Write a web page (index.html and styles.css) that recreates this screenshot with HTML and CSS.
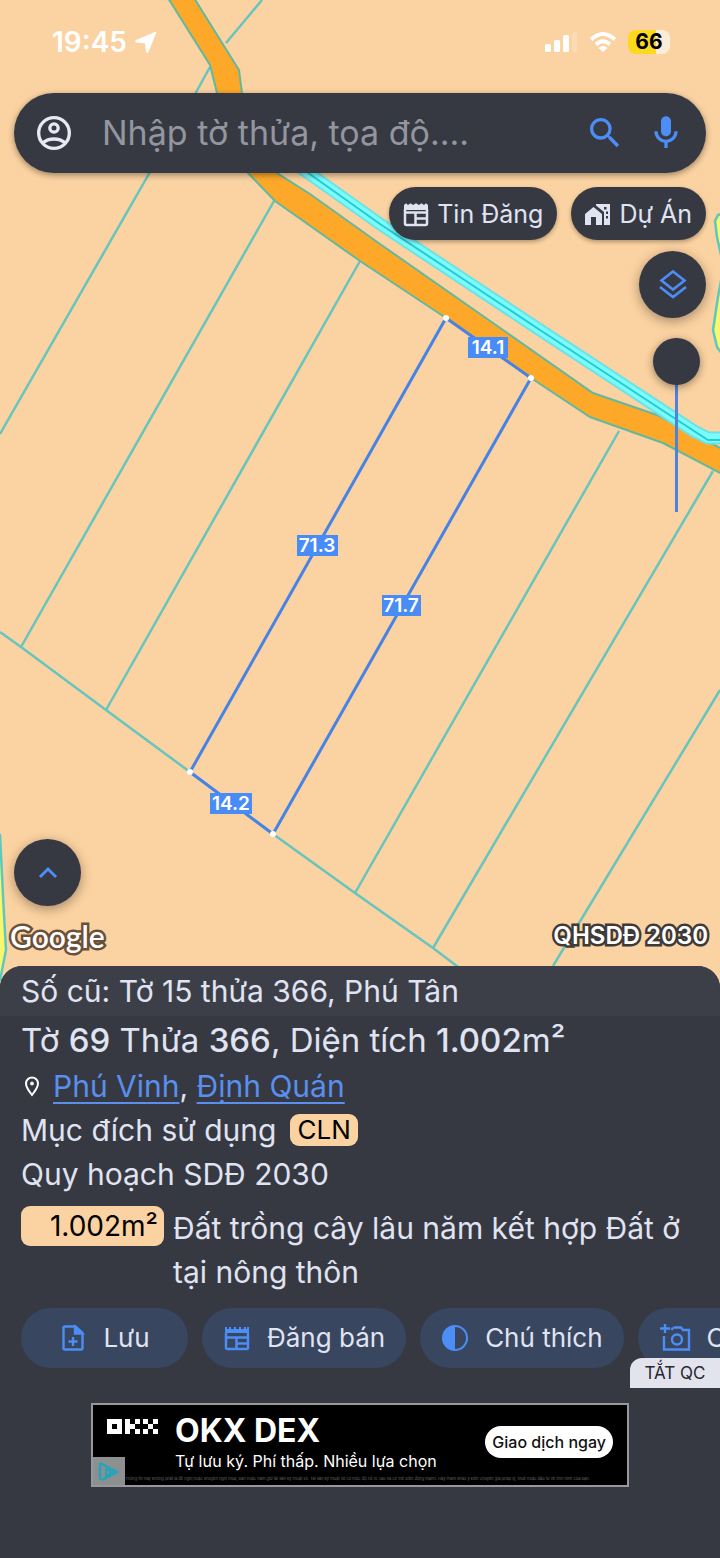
FILE: index.html
```html
<!DOCTYPE html>
<html lang="vi">
<head>
	<meta charset="UTF-8">
	<meta name="viewport" content="width=device-width, initial-scale=1.0">
	<title>Tờ 69 Thửa 366</title>
	<link rel="stylesheet" href="styles.css">
</head>
<body>
	<main class="map">
		<!-- parcels, road and canal -->
		<svg class="map-canvas" viewBox="0 0 720 990" preserveAspectRatio="xMidYMin slice">
			<g class="field">
				<path d="M-5 830L0 835L4 915L6 950L0 980L-5 980Z"/>
				<path d="M724 213L718 215L715 221L717 237L721 255"/>
				<path d="M722 275L718 297L713 330L717 347L722 354"/>
			</g>
			<g class="parcel">
				<path d="M262 0L226 43M210 67L194 96"/>
				<path d="M150 172L0 434"/>
				<path d="M274 201L21 647"/>
				<path d="M360 261L106 710"/>
				<path d="M619 431L355 893"/>
				<path d="M713 471L433 948"/>
				<path d="M720 690L553 966"/>
				<path d="M0 632L21 647L106 710L190 772L273 834L355 893L433 948L470 976"/>
			</g>
			<path class="road" d="M168 -2L210 65L217 93L225 140L248 173L275 201L360 261L446 318L531 378L590 417L663 443L722 474L722 449L673 423L657 415L593 393L503 330L380 244L310 194L277 173L245 120L242 93L239 70L194 -2Z"/>
			<path class="canal-edge" d="M290 160L380 224L540 330L694 431L708 438L726 438"/>
			<path class="canal" d="M290 160L380 224L540 330L694 431L708 438L726 438"/>
			<path class="canal-line" d="M290 160L380 224L540 330L694 431L708 440L726 440"/>
			<path class="selected" d="M446 318L531 378L273 834L190 772Z"/>
			<g class="corner">
				<circle cx="446" cy="318" r="3"/>
				<circle cx="531" cy="378" r="3"/>
				<circle cx="273" cy="834" r="3"/>
				<circle cx="190" cy="772" r="3"/>
			</g>
			<g class="measure">
				<rect x="468" y="337" width="40" height="21"/><text x="488" y="354">14.1</text>
				<rect x="297" y="535" width="41" height="21"/><text x="317" y="552">71.3</text>
				<rect x="382" y="595" width="39" height="21"/><text x="401" y="612">71.7</text>
				<rect x="210" y="793" width="42" height="21"/><text x="231" y="810">14.2</text>
			</g>
		</svg>

		<header class="status">
			<span class="time">19:45</span>
			<svg class="locate" width="24" height="24" viewBox="0 0 24 24"><path d="M22 2L14 22Q13 23 12.5 22L11.5 13L2 12Q.5 11.300 2 10.500Z" fill="#fff" stroke="#fff" stroke-linejoin="round"/></svg>
			<svg class="signal" width="32" height="20" viewBox="0 0 32 20" fill="#fff">
				<rect y="12" width="6" height="8" rx="1.5"/><rect x="9" y="8" width="6" height="12" rx="1.5"/><rect x="18" y="3" width="6" height="17" rx="1.5"/><rect x="27" width="5" height="20" rx="1.5" opacity=".2"/>
			</svg>
			<svg width="28" height="22" viewBox="0 0 28 22" fill="none" stroke="#fff" stroke-width="4">
				<path d="M2 8.500Q14-2.500 26 8.500M7 13.500Q14 7 21 13.500"/><path d="M14 21L9.500 17Q14 13 18.500 17Z" fill="#fff" stroke="none"/>
			</svg>
			<span class="battery">66</span>
		</header>

		<form class="search" role="search">
			<button class="icon-btn" type="button" aria-label="Tài khoản">
				<svg width="40" height="40" viewBox="0 0 24 24" fill="none" stroke="#e6e9f5" stroke-width="2"><circle cx="12" cy="12" r="9.2"/><circle cx="12" cy="9" r="2.5"/><path d="M5.300 17.900C9 14.800 15 14.800 18.700 17.900"/></svg>
			</button>
			<input class="search-input" type="text" placeholder="Nhập tờ thửa, tọa độ...." aria-label="Nhập tờ thửa, tọa độ">
			<button class="icon-btn" type="submit" aria-label="Tìm kiếm">
				<svg width="40" height="40" viewBox="0 0 24 24" fill="#4c8df6"><path d="M15.500 14h-.79l-.28-.27A6.471 6.471 0 0 0 16 9.500 6.500 6.500 0 1 0 9.500 16c1.610 0 3.090-.59 4.230-1.570l.27.28v.79l5 4.990L20.490 19l-4.990-5zm-6 0C7.010 14 5 11.990 5 9.500S7.010 5 9.500 5 14 7.010 14 9.500 11.990 14 9.500 14z"/></svg>
			</button>
			<button class="icon-btn" type="button" aria-label="Giọng nói">
				<svg width="40" height="40" viewBox="0 0 24 24" fill="#4c8df6"><path d="M12 14c1.660 0 3-1.340 3-3V5c0-1.660-1.340-3-3-3S9 3.340 9 5v6c0 1.660 1.340 3 3 3zm5-3c0 2.760-2.240 5-5 5s-5-2.240-5-5H5c0 3.530 2.610 6.430 6 6.920V21h2v-3.080c3.390-.49 6-3.390 6-6.920h-2z"/></svg>
			</button>
		</form>

		<nav class="chips">
			<button class="chip" type="button">
				<svg width="26" height="28" viewBox="1 0 26 28"><path d="M3 9V23.500Q3 25 4.500 25H23.500Q25 25 25 23.500V9M3 12.500H25M13.500 12.500V25M14 18.500H25" fill="none" stroke="#e0e3f2" stroke-width="2.500"/><path d="M2 5l2-1.800 2 1.800 2.500-1.800L11 5l3-1.800L17 5l2.500-1.800L22 5l2-1.800L26 5v5H2Z" fill="#e0e3f2"/></svg>
				Tin Đăng
			</button>
			<button class="chip" type="button">
				<svg width="26" height="28" viewBox="1 0 26 28" fill="#e0e3f2"><path d="M1 14L9.500 7L18 14V25H12V17H7V25H1Z"/><path fill-rule="evenodd" d="M12 4H26V25H20V12L12 5.500ZM20 7V9.500H22.500V7ZM22 11.500V14H24V11.500ZM22 16V18.500H24V16Z"/></svg>
				Dự Án
			</button>
		</nav>

		<div class="tools">
			<button class="round" type="button" aria-label="Lớp bản đồ">
				<svg width="32" height="32" viewBox="0 0 32 32" fill="none" stroke="#4c8df6" stroke-width="2.6"><path d="M16 2.500L27.500 11.500L16 20.500L4.500 11.500Z"/><path d="M3 18L16 28L29 18"/></svg>
			</button>
			<input class="opacity" type="range" min="0" max="100" value="100" aria-label="Độ mờ">
		</div>

		<div class="map-bottom">
			<button class="round" type="button" aria-label="Mở rộng">
				<svg width="24" height="24" viewBox="0 0 24 24" fill="none" stroke="#4c8df6" stroke-width="3"><path d="M4 16L12 8L20 16"/></svg>
			</button>
			<div class="credits">
				<span class="google">Google</span>
				<span class="plan">QHSDĐ 2030</span>
			</div>
		</div>
	</main>

	<section class="sheet">
		<p class="old-number">Số cũ: Tờ 15 thửa 366, Phú Tân</p>
		<div class="info">
			<h1 class="title">Tờ <b>69</b> Thửa <b>366</b>, Diện tích <b>1.002</b>m²</h1>
			<p class="place">
				<svg width="22" height="22" viewBox="0 0 22 22" fill="none" stroke="#fff" stroke-width="2"><path d="M11 20C7 15 5 12 5 8.500A6 6 0 0 1 17 8.500C17 12 15 15 11 20Z"/><circle cx="11" cy="8.5" r="1.5" fill="#fff" stroke-width="1"/></svg>
				<span><a href="#">Phú Vinh</a>, <a href="#">Định Quán</a></span>
			</p>
			<p class="purpose">Mục đích sử dụng <span class="code">CLN</span></p>
			<p>Quy hoạch SDĐ 2030</p>
			<div class="land">
				<span class="area">1.002m²</span>
				<p>Đất trồng cây lâu năm kết hợp Đất ở tại nông thôn</p>
			</div>
		</div>

		<div class="actions">
			<button class="action" type="button">
				<svg width="28" height="28" viewBox="0 0 28 28" fill="none" stroke="#4c8df6" stroke-width="2.4"><path d="M16.500 2.500H6Q4.500 2.500 4.500 4V24Q4.500 25.500 6 25.500H22Q23.500 25.500 23.500 24V9Z" stroke-linejoin="round"/><path d="M16 3V9.500H23Z" fill="#4c8df6"/><path d="M14 13V22M9.500 17.500H18.500"/></svg>
				Lưu
			</button>
			<button class="action" type="button">
				<svg width="28" height="28" viewBox="0 0 28 28"><path d="M3 9V23.500Q3 25 4.500 25H23.500Q25 25 25 23.500V9M3 13.500H25M13.500 13.500V25M14 19.500H25" fill="none" stroke="#4c8df6" stroke-width="2.500"/><path d="M2 3h2v2h2V3h2v2h3V3h2v2h3V3h2v2h3V3h2v2h1V3h2v6H2Z" fill="#4c8df6"/></svg>
				Đăng bán
			</button>
			<button class="action" type="button">
				<svg width="28" height="28" viewBox="0 0 28 28"><circle cx="14" cy="14" r="12" fill="none" stroke="#4c8df6" stroke-width="2"/><path d="M14 1.500A12.500 12.500 0 0 0 14 26.500Z" fill="#4c8df6"/></svg>
				Chú thích
			</button>
			<button class="action" type="button">
				<svg width="32" height="28" viewBox="0 0 32 28" fill="none" stroke="#4c8df6" stroke-width="2.4"><path d="M6 0V9M1 4.500H11M5 12V25.500H30V6H24L22 3.500H14.500M14 3.500L12.500 6"/><circle cx="18" cy="15.5" r="5"/></svg>
				Chụp ảnh
			</button>
		</div>

		<div class="ad-area">
			<button class="ad-off" type="button">TẮT QC</button>
			<aside class="ad">
				<svg class="okx" width="52" height="16" viewBox="0 0 52 16" fill="#fff"><path fill-rule="evenodd" d="M0 0H15V15H0ZM5 5V10H10V5Z"/><path d="M18 0h5v5h5v5h-5v5h-5ZM28 0h5v5h-5ZM28 10h5v5h-5ZM36 0h5v5h-5ZM46 0h5v5h-5ZM41 5h5v5h-5ZM36 10h5v5h-5ZM46 10h5v5h-5Z"/></svg>
				<div class="ad-copy">
					<strong>OKX DEX</strong>
					<span>Tự lưu ký. Phí thấp. Nhiều lựa chọn</span>
				</div>
				<a class="ad-cta" href="#">Giao dịch ngay</a>
				<small class="ad-note">Thông tin này không phải là đề nghị hoặc khuyến nghị mua, bán hoặc nắm giữ tài sản kỹ thuật số. Tài sản kỹ thuật số có mức độ rủi ro cao và có thể biến động mạnh. Hãy tham khảo ý kiến chuyên gia pháp lý, thuế hoặc đầu tư về tình hình của bạn.</small>
				<svg class="ad-choices" width="32" height="28" viewBox="0 0 32 28"><path d="M0 0H32V28H0Z" fill="#8d8f90"/><path d="M7 6V23M7 6L24 15L9 23" fill="none" stroke="#20a5bd" stroke-width="2.5"/><path d="M13 12V19L19 15Z" fill="none" stroke="#20a5bd" stroke-width="2"/></svg>
			</aside>
		</div>
	</section>
</body>
</html>
```
FILE: styles.css
```css
* {
	box-sizing: border-box;
	margin: 0;
	padding: 0;
}

body {
	display: flex;
	flex-direction: column;
	min-height: 100vh;
	background: #363941;
	color: #e0e3f2;
	font-family: Inter, "Noto Sans", sans-serif;
	font-size: 30px;
	line-height: 44px;
	overflow-x: hidden;
}

button, input {
	border: 0;
	background: none;
	color: inherit;
	font: inherit;
}

svg {
	flex: none;
	display: block;
}

/* map */
.map {
	position: relative;
	flex: 1;
	display: flex;
	flex-direction: column;
	padding: 0 14px 32px;
	background: #fbd2a1;
}

.map > * {
	position: relative;
}

.map > .map-canvas {
	position: absolute;
	top: 0;
	left: 0;
	width: 100%;
	height: 100%;
}

.parcel {
	fill: none;
	stroke: #66c5be;
	stroke-width: 2.5;
}

.field {
	fill: #f9f76e;
	stroke: #5cc9bd;
	stroke-width: 2.5;
}

.road {
	fill: #fda829;
	stroke: #62b9a0;
	stroke-width: 2;
}

.canal-edge, .canal, .canal-line {
	fill: none;
	stroke: #6be3e6;
	stroke-width: 13;
}

.canal {
	stroke: #7cfbfc;
	stroke-width: 9;
}

.canal-line {
	stroke: #25cbd3;
	stroke-width: 2;
}

.selected {
	fill: none;
	stroke: #4583e6;
	stroke-width: 3;
}

.corner {
	fill: #fff;
}

.measure rect {
	fill: #4a8cf5;
}

.measure text {
	fill: #fff;
	font-size: 19px;
	font-weight: 600;
	text-anchor: middle;
}

.status {
	display: flex;
	align-items: center;
	height: 93px;
	padding: 0 36px 10px 38px;
	color: #fff;
}

.time {
	font-size: 28px;
	font-weight: 600;
}

.locate {
	margin-left: 7px;
}

.signal {
	margin: 0 12px 0 auto;
}

.battery {
	width: 42px;
	height: 24px;
	margin-left: 11px;
	border-radius: 8px;
	background: linear-gradient(90deg, #fbd91c 66%, #fbecd9 66%);
	color: #000;
	font-size: 21px;
	font-weight: 700;
	line-height: 24px;
	text-align: center;
}

.search {
	display: flex;
	align-items: center;
	height: 80px;
	padding: 0 20px;
	border-radius: 40px;
	background: #363941;
	box-shadow: 0 2px 6px rgba(0, 0, 0, .4);
}

.icon-btn {
	cursor: pointer;
}

.icon-btn + .icon-btn {
	margin-left: 21px;
}

.search-input {
	flex: 1;
	min-width: 0;
	padding: 0 28px;
	font-size: 34px;
	outline: none;
}

.search-input::placeholder {
	color: #93959f;
}

.chips {
	display: flex;
	justify-content: flex-end;
	gap: 14px;
	margin-top: 14px;
}

.chip {
	display: flex;
	align-items: center;
	gap: 8px;
	height: 53px;
	padding: 0 14px;
	border-radius: 27px;
	background: #363941;
	box-shadow: 0 2px 4px rgba(0, 0, 0, .3);
	font-size: 25px;
	cursor: pointer;
}

.tools {
	display: flex;
	flex-direction: column;
	align-items: flex-end;
	gap: 20px;
	margin-top: 11px;
}

.round {
	display: flex;
	align-items: center;
	justify-content: center;
	width: 67px;
	height: 67px;
	border-radius: 50%;
	background: #363941;
	box-shadow: 0 3px 12px rgba(0, 0, 0, .35);
	cursor: pointer;
}

.opacity {
	appearance: none;
	writing-mode: vertical-lr;
	direction: rtl;
	width: 47px;
	height: 174px;
	margin-right: 6px;
	background: linear-gradient(#4f82dc, #4f82dc) center / 3px 100% no-repeat;
}

.opacity::-webkit-slider-thumb {
	appearance: none;
	width: 47px;
	height: 47px;
	border-radius: 50%;
	background: #363941;
	box-shadow: 0 2px 8px rgba(0, 0, 0, .4);
}

.map-bottom {
	margin-top: auto;
}

.credits {
	display: flex;
	align-items: center;
	justify-content: space-between;
	height: 36px;
	margin: 12px -2px 0 -4px;
	color: #fff;
	font-size: 24px;
	font-weight: 600;
	line-height: 36px;
	-webkit-text-stroke: 5px #3e3a38;
	paint-order: stroke fill;
}

.google {
	font-family: Lato, sans-serif;
	font-size: 30px;
	-webkit-text-stroke: 5px #695039;
}

/* bottom sheet */
.sheet {
	position: relative;
	margin-top: -20px;
	border-radius: 22px 22px 0 0;
	background: #363941;
	overflow: hidden;
}

.old-number {
	height: 50px;
	padding: 0 21px;
	background: #3c3f48;
	line-height: 50px;
}

.info {
	padding: 0 14px 0 21px;
}

.title {
	font-size: 33px;
	font-weight: 400;
	line-height: 48px;
}

.title b {
	font-weight: 500;
}

.place {
	display: flex;
	align-items: center;
	gap: 10px;
}

.place a {
	color: #5a8fee;
	text-decoration-thickness: 2px;
	text-underline-offset: 5px;
	text-decoration-skip-ink: none;
}

.purpose {
	display: flex;
	align-items: center;
	gap: 14px;
}

.code {
	padding: 0 7px;
	border-radius: 9px;
	background: #fbd2a1;
	color: #000;
	font-size: 26px;
	line-height: 32px;
}

.land {
	display: flex;
	align-items: flex-start;
	gap: 9px;
	margin-top: 10px;
}

.area {
	flex: none;
	width: 143px;
	padding-right: 6px;
	border-radius: 9px;
	background: #fbd2a1;
	color: #000;
	font-size: 28px;
	line-height: 40px;
	text-align: right;
}

.actions {
	display: flex;
	gap: 14px;
	padding: 14px 0 0 21px;
	overflow: hidden;
}

.action {
	flex: none;
	display: flex;
	align-items: center;
	justify-content: center;
	gap: 16px;
	min-width: 167px;
	height: 60px;
	padding: 0 21px;
	border-radius: 30px;
	background: #38465f;
	font-size: 26px;
	cursor: pointer;
}

.ad-area {
	position: relative;
	padding: 35px 91px 71px;
}

.ad-off {
	position: absolute;
	top: -10px;
	right: 0;
	width: 90px;
	height: 30px;
	border-radius: 12px 0 0 0;
	background: #e3e3ee;
	color: #26282e;
	font-size: 17px;
	line-height: 30px;
	cursor: pointer;
}

.ad {
	position: relative;
	display: flex;
	align-items: flex-start;
	height: 84px;
	padding: 8px 14px 0;
	border: 2px solid #97989b;
	background: #000;
	color: #fff;
}

.okx {
	margin-top: 6px;
}

.ad-copy {
	flex: 1;
	display: flex;
	flex-direction: column;
	margin-left: 16px;
	font-size: 16px;
	line-height: 24px;
	white-space: nowrap;
}

.ad-copy strong {
	font-size: 32px;
	line-height: 36px;
}

.ad-cta {
	margin-top: 13px;
	padding: 0 7px;
	border-radius: 16px;
	background: #fff;
	color: #111;
	font-size: 16px;
	font-weight: 500;
	line-height: 32px;
	text-decoration: none;
}

.ad-note {
	position: absolute;
	bottom: 3px;
	left: 32px;
	right: 8px;
	overflow: hidden;
	color: #666;
	font-size: 4px;
	line-height: 6px;
	white-space: nowrap;
}

.ad-choices {
	position: absolute;
	bottom: 0;
	left: 0;
}
```
